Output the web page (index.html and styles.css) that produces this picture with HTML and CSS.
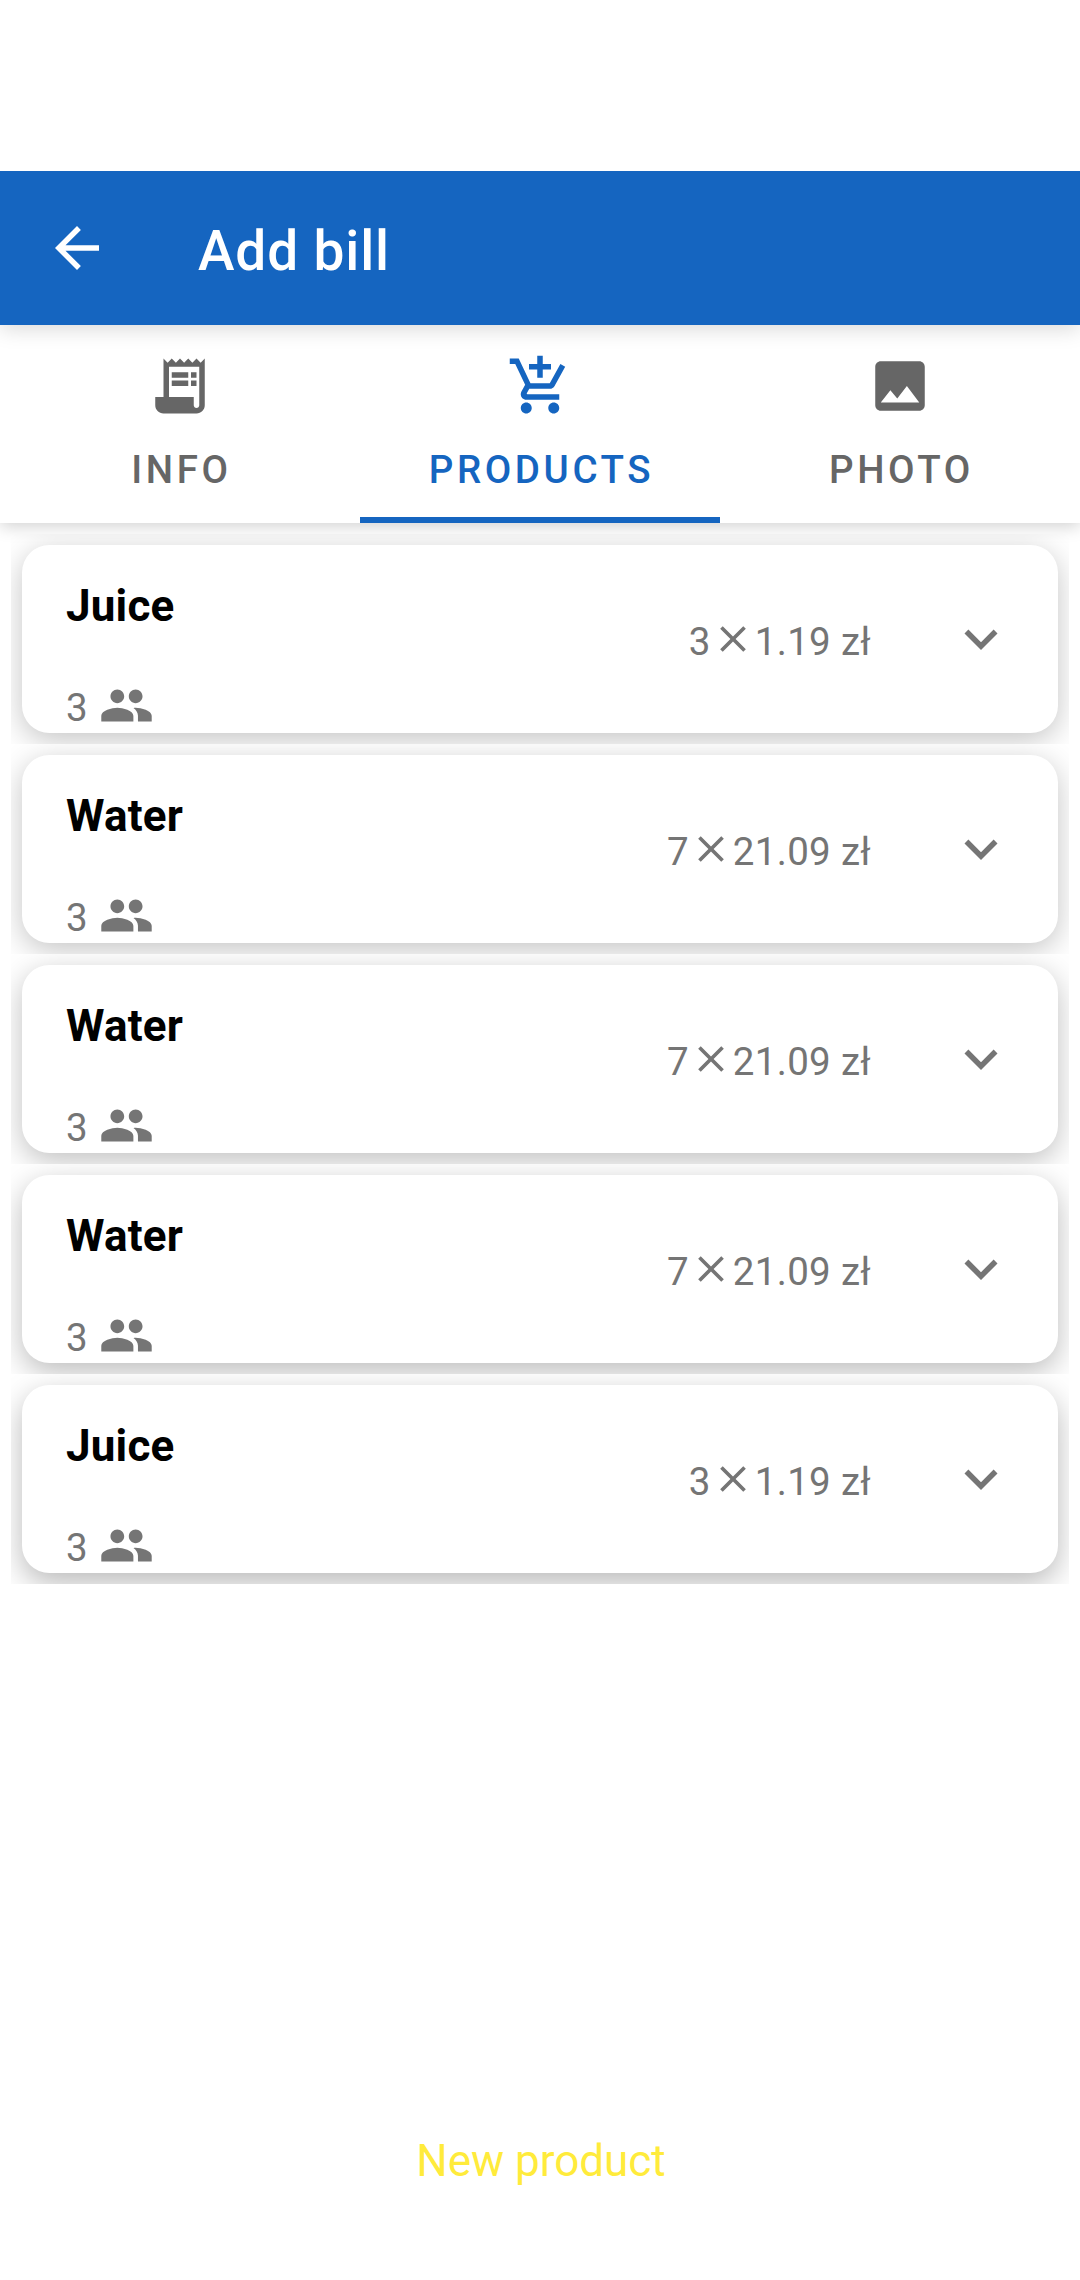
FILE: index.html
```
<!DOCTYPE html>
<html lang="en">
<head>
<meta charset="utf-8">
<title>Add bill</title>
<link rel="stylesheet" href="styles.css">
</head>
<body>
<svg class="defs" width="0" height="0">
  <symbol id="people" viewBox="0 0 24 24"><path d="M16 11c1.66 0 2.99-1.34 2.99-3S17.66 5 16 5c-1.66 0-3 1.34-3 3s1.34 3 3 3zm-8 0c1.66 0 2.99-1.34 2.99-3S9.66 5 8 5C6.34 5 5 6.34 5 8s1.34 3 3 3zm0 2c-2.33 0-7 1.17-7 3.5V19h14v-2.500c0-2.330-4.670-3.500-7-3.500zm8 0c-.29 0-.62.020-.97.050 1.160.840 1.970 1.970 1.970 3.450V19h6v-2.500c0-2.330-4.670-3.500-7-3.500z"/></symbol>
  <symbol id="times" viewBox="0 0 24 24"><path d="M19 6.410L17.590 5 12 10.590 6.410 5 5 6.410 10.590 12 5 17.590 6.410 19 12 13.410 17.590 19 19 17.590 13.410 12z"/></symbol>
  <symbol id="more" viewBox="0 0 24 24"><path d="M16.590 8.590L12 13.170 7.410 8.590 6 10l6 6 6-6z"/></symbol>
</svg>
<div class="screen">
  <header class="appbar">
    <svg class="icon" viewBox="0 0 24 24"><path d="M20 11H7.830l5.590-5.590L12 4l-8 8 8 8 1.410-1.410L7.830 13H20v-2z"/></svg>
    <h1 class="title">Add bill</h1>
  </header>
  <nav class="tabs">
    <div class="tab">
      <svg class="icon" viewBox="0 0 24 24"><path d="M19.500 3.500L18 2l-1.500 1.500L15 2l-1.500 1.500L12 2l-1.500 1.500L9 2 7.500 3.500 6 2v14H3v3c0 1.660 1.340 3 3 3h12c1.660 0 3-1.340 3-3V2l-1.500 1.500zM19 19c0 .55-.45 1-1 1s-1-.45-1-1v-3H8V5h11v14z"/><path d="M9 7h6v2H9zM16 7h2v2h-2zM9 10h6v2H9zM16 10h2v2h-2z"/></svg>
      <span class="label">INFO</span>
    </div>
    <div class="tab active">
      <svg class="icon" viewBox="0 0 24 24"><path d="M11 9h2V6h3V4h-3V1h-2v3H8v2h3v3zm-4 9c-1.100 0-1.990.9-1.990 2S5.900 22 7 22s2-.9 2-2-.9-2-2-2zm10 0c-1.100 0-1.990.9-1.990 2s.89 2 1.990 2 2-.9 2-2-.9-2-2-2zm-9.830-3.250l.03-.12.9-1.630h7.450c.75 0 1.410-.41 1.750-1.030l3.860-7.010L19.420 4h-.01l-1.100 2-2.760 5H8.530l-.13-.27L6.160 6l-.95-2-.94-2H1v2h2l3.600 7.590-1.350 2.450c-.16.280-.25.610-.25.960 0 1.100.9 2 2 2h12v-2H7.420c-.13 0-.25-.11-.25-.25z"/></svg>
      <span class="label">PRODUCTS</span>
    </div>
    <div class="tab">
      <svg class="icon" viewBox="0 0 24 24"><path d="M21 19V5c0-1.100-.9-2-2-2H5c-1.100 0-2 .9-2 2v14c0 1.100.9 2 2 2h14c1.100 0 2-.9 2-2zM8.500 13.500l2.500 3.010L14.500 12l4.500 6H5l3.500-4.500z"/></svg>
      <span class="label">PHOTO</span>
    </div>
  </nav>
  <main class="list">
    <div class="row"><article class="card">
      <div class="item"><h2 class="name">Juice</h2><div class="people"><span>3</span><svg class="icon-people"><use href="#people"/></svg></div></div>
      <div class="price"><span>3</span><svg class="icon-times"><use href="#times"/></svg><span>1.19 zł</span></div>
      <svg class="icon"><use href="#more"/></svg>
    </article></div>
    <div class="row"><article class="card">
      <div class="item"><h2 class="name">Water</h2><div class="people"><span>3</span><svg class="icon-people"><use href="#people"/></svg></div></div>
      <div class="price"><span>7</span><svg class="icon-times"><use href="#times"/></svg><span>21.09 zł</span></div>
      <svg class="icon"><use href="#more"/></svg>
    </article></div>
    <div class="row"><article class="card">
      <div class="item"><h2 class="name">Water</h2><div class="people"><span>3</span><svg class="icon-people"><use href="#people"/></svg></div></div>
      <div class="price"><span>7</span><svg class="icon-times"><use href="#times"/></svg><span>21.09 zł</span></div>
      <svg class="icon"><use href="#more"/></svg>
    </article></div>
    <div class="row"><article class="card">
      <div class="item"><h2 class="name">Water</h2><div class="people"><span>3</span><svg class="icon-people"><use href="#people"/></svg></div></div>
      <div class="price"><span>7</span><svg class="icon-times"><use href="#times"/></svg><span>21.09 zł</span></div>
      <svg class="icon"><use href="#more"/></svg>
    </article></div>
    <div class="row"><article class="card">
      <div class="item"><h2 class="name">Juice</h2><div class="people"><span>3</span><svg class="icon-people"><use href="#people"/></svg></div></div>
      <div class="price"><span>3</span><svg class="icon-times"><use href="#times"/></svg><span>1.19 zł</span></div>
      <svg class="icon"><use href="#more"/></svg>
    </article></div>
  </main>
  <footer class="new-product">New product</footer>
</div>
</body>
</html>
```
FILE: styles.css
```
* { box-sizing: border-box; margin: 0; }
body { background: #fff; font-family: Roboto, sans-serif; color: #757575; }
svg { fill: currentColor; display: block; flex: none; }
.defs { display: none; }
.screen { width: 1080px; height: 2280px; padding-top: 171px; display: flex; flex-direction: column; overflow: hidden; }
.icon { width: 66px; height: 66px; }

.appbar { height: 154px; flex: none; display: flex; align-items: center; padding-left: 44px; gap: 88px; background: #1565c0; color: #fff; z-index: 2; box-shadow: 0 4px 20px rgba(0, 0, 0, .15); clip-path: inset(0 0 -30px 0); }
.title { font-size: 55px; line-height: 64px; font-weight: 500; letter-spacing: .85px; padding-top: 6px; }

.tabs { height: 198px; flex: none; display: grid; grid-template-columns: repeat(3, 1fr); background: #fff; z-index: 1; box-shadow: 0 3px 16px rgba(0, 0, 0, .19); }
.tab { display: flex; flex-direction: column; align-items: center; padding-top: 28px; gap: 28px; color: #666; font-size: 38.5px; line-height: 46px; font-weight: 500; letter-spacing: 3.6px; }
.label { padding-left: 3px; }
.tab.active { color: #1565c0; border-bottom: 6px solid #1565c0; }

.list { flex: 1; padding: 11px 11px 0; }
.row { height: 210px; padding: 11px; overflow: hidden; }
.card { height: 188px; border-radius: 27.500px; background: #fff; display: flex; align-items: center; padding: 0 44px; box-shadow: 0 7px 30px rgba(0, 0, 0, .235); }
.row:nth-child(3) .card { box-shadow: 0 8px 30px rgba(0, 0, 0, .25); }
.row:nth-child(4) .card { box-shadow: 0 9px 30px rgba(0, 0, 0, .265); }
.row:nth-child(5) .card { box-shadow: 0 10px 30px rgba(0, 0, 0, .28); }
.item { flex: 1; align-self: stretch; padding-top: 35px; }
.name { font-size: 44px; line-height: 52px; font-weight: 700; letter-spacing: .2px; color: #000; }
.people { display: flex; align-items: center; gap: 11px; margin-top: 46px; height: 55px; font-size: 38.5px; line-height: 45px; }
.price { display: flex; align-items: center; margin-right: 77px; font-size: 38.5px; line-height: 45px; letter-spacing: .3px; }
.people span { padding-top: 3px; }
.price span { padding-top: 4px; }
.icon-people { width: 55px; height: 55px; }
.icon-times { width: 44px; height: 44px; }

.new-product { flex: none; height: 145px; padding-left: 2px; text-align: center; font-size: 44px; line-height: 52px; color: #ffeb3b; }
```
